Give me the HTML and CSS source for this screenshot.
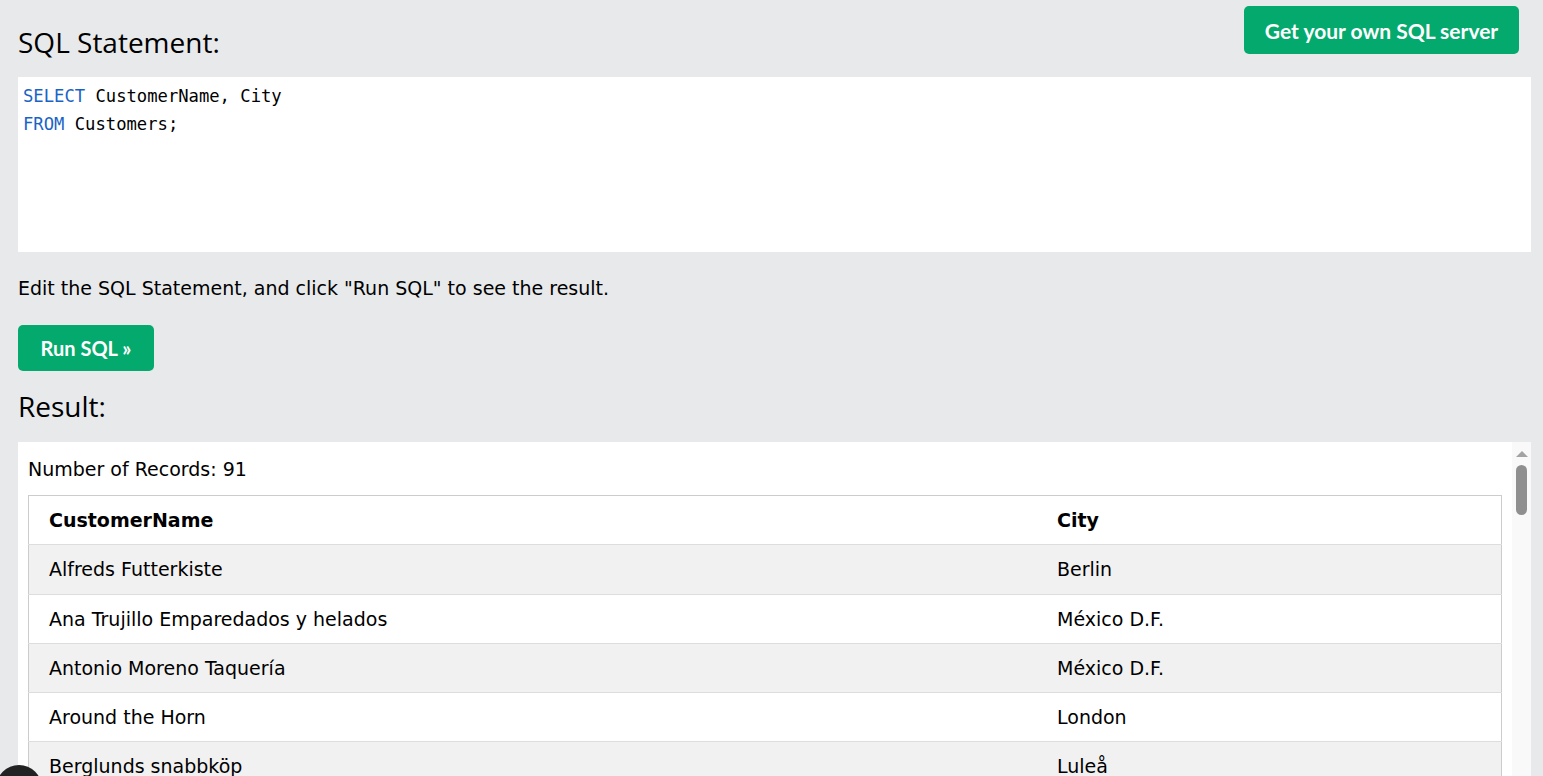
FILE: index.html
```html
<!DOCTYPE html>
<html>
<head>
<meta charset="utf-8">
<link rel="stylesheet" href="styles.css">
</head>
<body>
<div class="page">
  <div class="top">
    <h3 class="heading">SQL Statement:</h3>
    <a class="btn btn-server">Get your own SQL server</a>
  </div>
  <div class="code">
    <div><span class="kw">SELECT</span> CustomerName, City</div>
    <div><span class="kw">FROM</span> Customers;</div>
  </div>
  <p class="hint">Edit the SQL Statement, and click "Run SQL" to see the result.</p>
  <a class="btn btn-run">Run SQL »</a>
  <h3 class="heading result-h">Result:</h3>
  <div class="result">
    <div class="result-inner">
      <div class="count">Number of Records: 91</div>
      <table class="tbl">
        <tr><th class="c1">CustomerName</th><th>City</th></tr>
        <tr><td>Alfreds Futterkiste</td><td>Berlin</td></tr>
        <tr><td>Ana Trujillo Emparedados y helados</td><td>México D.F.</td></tr>
        <tr><td>Antonio Moreno Taquería</td><td>México D.F.</td></tr>
        <tr><td>Around the Horn</td><td>London</td></tr>
        <tr><td>Berglunds snabbköp</td><td>Luleå</td></tr>
        <tr><td>Blauer See Delikatessen</td><td>Mannheim</td></tr>
      </table>
    </div>
    <div class="scrollbar">
      <div class="arrow"></div>
      <div class="thumb"></div>
    </div>
  </div>
</div>
<div class="fab"></div>
</body>
</html>
```

FILE: styles.css
```css
html, body {
  margin: 0;
  padding: 0;
  background: #e7e9eb;
  height: 100%;
  overflow: hidden;
}
.page {
  padding: 0 12px 0 18px;
}
.top {
  display: flex;
  justify-content: space-between;
  align-items: flex-start;
}
.heading {
  margin: 0;
  font-family: "Open Sans", sans-serif;
  font-weight: 400;
  font-size: 28px;
  line-height: 38px;
  color: #000;
}
.top .heading {
  padding-top: 23px;
  padding-bottom: 16px;
}
.btn {
  display: inline-flex;
  align-items: center;
  justify-content: center;
  background: #04aa6d;
  color: #fff;
  font-family: "Lato", sans-serif;
  font-weight: 700;
  border-radius: 5px;
  text-decoration: none;
}
.btn-server {
  margin-top: 6px;
  margin-right: 12px;
  width: 275px;
  height: 48px;
  font-size: 21px;
}
.code {
  background: #fff;
  height: 165px;
  padding: 5px 5px;
  font-family: "DejaVu Sans Mono", monospace;
  font-size: 17.2px;
  line-height: 28px;
  color: #000;
}
.kw {
  color: #1a63c6;
}
.hint {
  margin: 0;
  padding-top: 24px;
  font-family: "DejaVu Sans", sans-serif;
  font-size: 19px;
  line-height: 24px;
  color: #000;
}
.btn-run {
  margin-top: 25px;
  width: 136px;
  height: 46px;
  font-size: 20px;
}
.result-h {
  padding-top: 16px;
  padding-bottom: 17px;
}
.result {
  display: flex;
  background: #fff;
  height: 400px;
}
.result-inner {
  flex: 1;
  padding: 10px 10px 0 10px;
}
.count {
  font-family: "DejaVu Sans", sans-serif;
  font-size: 19px;
  line-height: 34px;
  padding-bottom: 9px;
}
.tbl {
  width: 100%;
  border-collapse: collapse;
  border: 1px solid #ccc;
  font-family: "DejaVu Sans", sans-serif;
  font-size: 19px;
}
.tbl th, .tbl td {
  text-align: left;
  padding: 12px 20px;
  line-height: 24.3px;
  border-bottom: 1px solid #ddd;
}
.tbl th {
  font-weight: 700;
}
.tbl .c1 {
  width: 968px;
}
.tbl tr:nth-child(even) {
  background: #f1f1f1;
}
.scrollbar {
  width: 19px;
  background: #f9f9f9;
  display: flex;
  flex-direction: column;
  align-items: center;
}
.arrow {
  margin-top: 9px;
  width: 0;
  height: 0;
  border-left: 6px solid transparent;
  border-right: 6px solid transparent;
  border-bottom: 6px solid #a3a3a3;
}
.thumb {
  margin-top: 8px;
  width: 11px;
  height: 50px;
  border-radius: 6px;
  background: #8f8f8f;
}
.fab {
  position: fixed;
  left: -4px;
  top: 765px;
  width: 46px;
  height: 46px;
  border-radius: 50%;
  background: #222;
}
```
